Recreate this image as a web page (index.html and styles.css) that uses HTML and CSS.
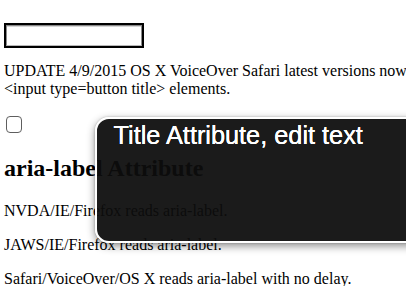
FILE: index.html
```html
<!DOCTYPE html>
<html>
<head>
<meta charset="utf-8">
<link rel="stylesheet" href="styles.css">
</head>
<body>
<div class="page">
  <input class="text-field" type="text" title="Title Attribute">
  <p class="update">UPDATE 4/9/2015 OS X VoiceOver Safari latest versions now<br>&lt;input type=button title&gt; elements.</p>
  <div class="check-row"><input class="check" type="checkbox"></div>
  <h2 class="heading">aria-label Attribute</h2>
  <p class="note">NVDA/IE/Firefox reads aria-label.</p>
  <p class="note">JAWS/IE/Firefox reads aria-label.</p>
  <p class="note">Safari/VoiceOver/OS X reads aria-label with no delay.</p>
</div>
<div class="vo-caption">Title Attribute, edit text</div>
</body>
</html>
```
FILE: styles.css
```css
html, body {
  margin: 0;
  padding: 0;
  background: #fff;
  overflow: hidden;
}
body {
  width: 406px;
  height: 286px;
  position: relative;
  font-family: "Liberation Serif", "Times New Roman", serif;
  font-size: 16px;
  color: #000;
}
.page {
  padding: 25px 0 0 4px;
}
.text-field {
  display: block;
  box-sizing: border-box;
  width: 136px;
  height: 21px;
  margin: 0 0 0 2px;
  padding: 0;
  border: 1px solid #8a8a8a;
  border-bottom-color: #b8b8b8;
  box-shadow: inset 0 1px 0 #d6d6d6;
  outline: 2px solid #000;
  background: #fff;
}
.update {
  margin: 16px 0;
  white-space: nowrap;
}
.check-row {
  height: 21.5px;
  padding-top: 2px;
  box-sizing: border-box;
}
.check {
  -webkit-appearance: none;
  appearance: none;
  display: block;
  box-sizing: border-box;
  width: 16px;
  height: 17px;
  margin: 0 0 0 2px;
  border: 1px solid #5f5f5f;
  border-radius: 4px;
  background: #fff;
}
.heading {
  font-size: 24px;
  font-weight: bold;
  margin: 19.92px 0;
}
.note {
  margin: 16px 0;
  white-space: nowrap;
}
.vo-caption {
  position: absolute;
  left: 95px;
  top: 117px;
  width: 330px;
  height: 126px;
  box-sizing: border-box;
  border: 2.5px solid #fff;
  border-radius: 14px;
  background: rgba(13, 13, 13, 0.94);
  box-shadow: 0 3px 9px rgba(0, 0, 0, 0.45), 0 0 2px rgba(0, 0, 0, 0.25);
  padding: 2px 0 0 16.5px;
  font-family: "Liberation Sans", Arial, sans-serif;
  font-size: 25.3px;
  line-height: 28px;
  color: #fff;
  white-space: nowrap;
  text-shadow: 0 0 0.6px #fff, 0 0 0.6px #fff;
}
```
